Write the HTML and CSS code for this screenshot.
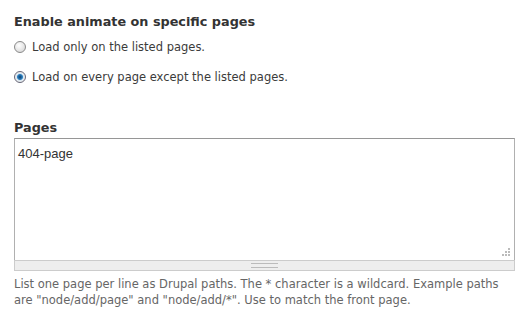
FILE: index.html
```html
<!DOCTYPE html>
<html>
<head>
<meta charset="utf-8">
<link rel="stylesheet" href="styles.css">
</head>
<body>
<div class="form">
  <div class="item">
    <div class="heading">Enable animate on specific pages</div>
    <label class="radio"><span class="dot"></span>Load only on the listed pages.</label>
    <label class="radio"><span class="dot on"></span>Load on every page except the listed pages.</label>
  </div>
  <div class="item pages">
    <div class="heading">Pages</div>
    <div class="ta-wrap">
      <div class="ta">404-page<span class="grip"></span></div>
      <div class="grippie"><span class="lines"></span></div>
    </div>
    <div class="desc">List one page per line as Drupal paths. The * character is a wildcard. Example paths are "node/add/page" and "node/add/*". Use  to match the front page.</div>
  </div>
</div>
</body>
</html>
```
FILE: styles.css
```css
html, body { margin: 0; padding: 0; background: #fff; }
body { font-family: "DejaVu Sans", Verdana, sans-serif; color: #3b3b3b; font-size: 11.5px; }
.form { padding: 14px 14px 0 14px; width: 502px; }
.heading { font-weight: bold; font-size: 12.8px; line-height: 16px; margin-bottom: 10px; color: #333; }
.radio { display: flex; align-items: center; height: 14px; margin-bottom: 15.5px; font-size: 11.5px; }
.dot { width: 12px; height: 12px; border-radius: 50%; border: 1px solid #8a8a8a; background: radial-gradient(circle at 40% 35%, #fff, #d0d0d0); margin-right: 6px; box-sizing: border-box; flex: none; }
.dot.on { background: radial-gradient(circle at 50% 50%, #0d3f6a 0, #2b7fc0 2.5px, #d8e6f0 3.5px, #f0f0f0 5px); border-color: #667; }
.pages { margin-top: 36px; }
.pages .heading { margin-bottom: 2px; }
.ta-wrap { width: 501px; }
.ta { position: relative; height: 122px; border: 1px solid #b0b0b0; border-top-color: #969696; border-bottom: none; font-family: "Liberation Sans", Arial, sans-serif; font-size: 13px; color: #333; padding: 7px 3px; box-sizing: border-box; line-height: 15px; }
.grip { position: absolute; right: 3px; bottom: 3px; width: 9px; height: 9px; background:
  linear-gradient(#bbb, #bbb) 6px 0/2px 2px no-repeat,
  linear-gradient(#bbb, #bbb) 3px 3px/2px 2px no-repeat,
  linear-gradient(#bbb, #bbb) 6px 3px/2px 2px no-repeat,
  linear-gradient(#bbb, #bbb) 0 6px/2px 2px no-repeat,
  linear-gradient(#bbb, #bbb) 3px 6px/2px 2px no-repeat,
  linear-gradient(#bbb, #bbb) 6px 6px/2px 2px no-repeat; }
.grippie { height: 9px; background: #eee; border: 1px solid #ccc; display: flex; justify-content: center; align-items: center; }
.lines { width: 27px; height: 5px; border-top: 1px solid #bbb; border-bottom: 1px solid #bbb; box-sizing: border-box; position: relative; }
.desc { margin-top: 5px; color: #666; font-size: 11.5px; line-height: 16px; }
```
